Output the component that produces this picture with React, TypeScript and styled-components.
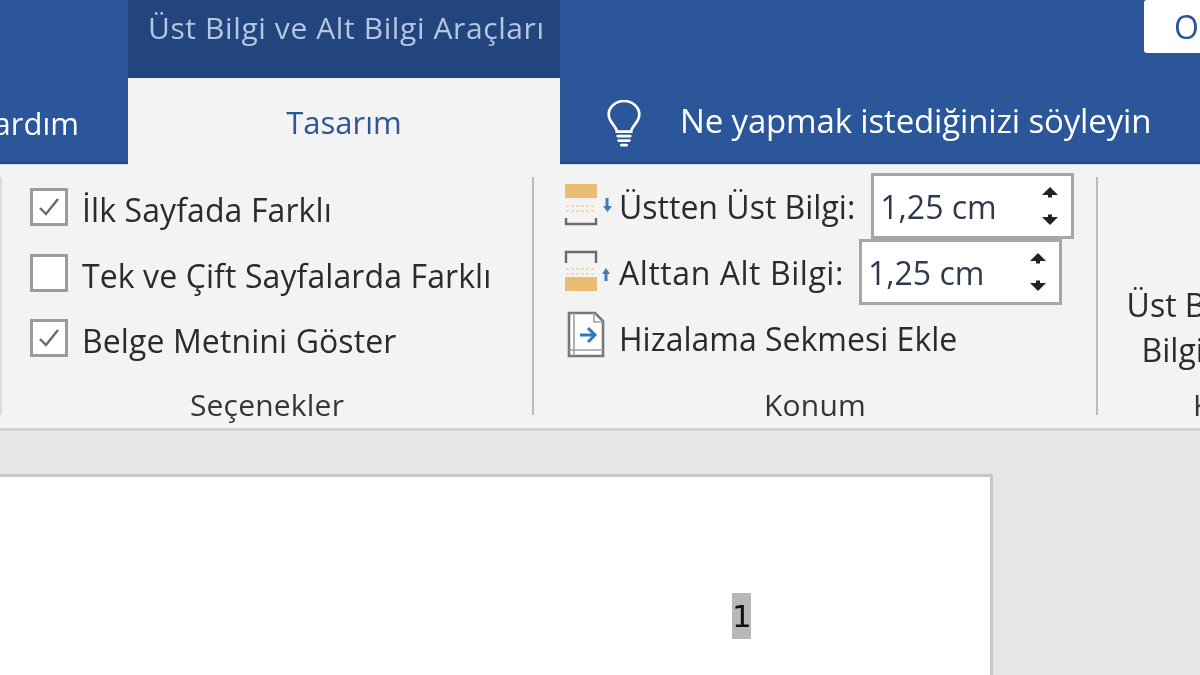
import React from "react";
import styled, { createGlobalStyle } from "styled-components";

const Global = createGlobalStyle`
  html, body { margin: 0; padding: 0; width: 1200px; height: 675px; overflow: hidden; background: #e6e6e6; }
  * { box-sizing: border-box; }
`;

const Window = styled.div`
  width: 1200px;
  height: 675px;
  overflow: hidden;
  display: flex;
  flex-direction: column;
  font-family: "Open Sans", "Noto Sans", sans-serif;
  filter: blur(0.5px);
`;

const TitleRow = styled.div`
  height: 78px;
  flex: none;
  background: #2b579a;
  display: flex;
  padding-left: 128px;
`;

const ContextTab = styled.div`
  width: 432px;
  background: #21457c;
  color: #b4c6e0;
  font-size: 30px;
  letter-spacing: 0.6px;
  padding: 7px 0 0 20px;
  white-space: nowrap;
`;

const AccountButton = styled.div`
  margin-left: 584px;
  width: 56px;
  height: 53px;
  background: #fff;
  border-radius: 3px 0 0 3px;
  color: #2b579a;
  font-size: 32px;
  padding: 5px 0 0 30px;
  overflow: hidden;
`;

const TabRow = styled.div`
  height: 87px;
  flex: none;
  background: #2b579a;
  display: flex;
  box-shadow: inset 0 -1px 0 #cfdff2, inset 0 -3px 0 #24497f;
`;

const HelpTab = styled.div`
  width: 128px;
  direction: rtl;
  overflow: hidden;
  color: #fff;
  font-size: 31px;
  padding: 24px 49px 0 0;
  white-space: nowrap;
`;

const ActiveTab = styled.div`
  width: 432px;
  background: #f3f3f3;
  color: #2b579a;
  font-size: 31px;
  text-align: center;
  padding-top: 23px;
`;

const TellMe = styled.div`
  display: flex;
  color: #fff;
  font-size: 33px;
  letter-spacing: -0.15px;
  padding: 20px 0 0 46px;
  white-space: nowrap;
`;

const BulbIcon = styled.svg`
  width: 36px;
  height: 47px;
  margin: 2px 38px 0 0;
  flex: none;
`;

const Ribbon = styled.div`
  height: 266px;
  flex: none;
  background: #f3f3f3;
  border-bottom: 3px solid #d2d2d2;
  display: flex;
  padding-top: 8px;
`;

const Separator = styled.div<{ $c: string }>`
  width: 2px;
  height: 238px;
  margin-top: 4px;
  flex: none;
  background: ${(p) => p.$c};
`;

const Group = styled.div<{ $w: number }>`
  width: ${(p) => p.$w}px;
  flex: none;
  display: flex;
  flex-direction: column;
  color: #2b2b2b;
`;

const GroupBody = styled.div`
  height: 211px;
  flex: none;
  display: flex;
  flex-direction: column;
`;

const GroupLabel = styled.div`
  text-align: center;
  font-size: 30px;
  letter-spacing: 0.2px;
  color: #363636;
  white-space: nowrap;
`;

const OptionsBody = styled(GroupBody)`
  padding: 15px 0 0 28px;
  gap: 27.5px;
`;

const CheckRow = styled.div`
  display: flex;
  align-items: flex-start;
  height: 38px;
  gap: 14px;
  font-size: 32px;
  line-height: 44px;
  letter-spacing: 0.1px;
  white-space: nowrap;
`;

const CheckBox = styled.div`
  width: 38px;
  height: 38px;
  border: 3px solid #9b9b9b;
  background: #fff;
  flex: none;
  display: flex;
  align-items: center;
  justify-content: center;
`;

const PositionBody = styled(GroupBody)`
  padding-left: 31px;
`;

const PosRow = styled.div<{ $spacing?: number }>`
  display: flex;
  align-items: center;
  height: 66px;
  font-size: 32px;
  letter-spacing: ${(p) => p.$spacing ?? 0}px;
  white-space: nowrap;
`;

const RowIcon = styled.svg`
  width: 48px;
  height: 46px;
  flex: none;
  margin-right: 6px;
  overflow: visible;
`;

const Spin = styled.div<{ $ml: number }>`
  width: 203px;
  height: 66px;
  margin-left: ${(p) => p.$ml}px;
  border: 3px solid #a6a6a6;
  background: #fff;
  display: flex;
  align-items: center;
  justify-content: space-between;
  padding: 0 13px 0 6px;
  color: #2f3a4d;
  font-size: 32px;
  letter-spacing: 0;
`;

const SpinArrows = styled.svg`
  width: 16px;
  height: 38px;
  flex: none;
`;

const LayoutBody = styled(GroupBody)`
  align-items: center;
  font-size: 32px;
  line-height: 45px;
  padding: 109px 4px 0 0;
  white-space: nowrap;
`;

const DocArea = styled.div`
  flex: 1;
  min-height: 0;
  background: #e6e6e6;
  padding-top: 43px;
`;

const Page = styled.div`
  width: 993px;
  height: 220px;
  background: #fff;
  border-top: 3px solid #c6c6c6;
  border-right: 3px solid #c6c6c6;
  padding: 116px 0 0 732px;
`;

const PageNumber = styled.div`
  width: 19px;
  height: 46px;
  background: #b8b8b8;
  color: #111;
  font-family: "DejaVu Sans", sans-serif;
  font-size: 31px;
  line-height: 46px;
  text-align: center;
`;

const Check = () => (
  <svg width="26" height="24" viewBox="0 0 26 24">
    <path d="M4 13l6 6L22 4" fill="none" stroke="#6b6b6b" strokeWidth="2.4" />
  </svg>
);

const Arrows = () => (
  <SpinArrows viewBox="0 0 16 38">
    <path d="M8 0l8 8H0z" fill="#222" />
    <rect x="6" y="8" width="4" height="2.500" fill="#222" />
    <path d="M8 38l-8-8h16z" fill="#222" />
    <rect x="6" y="27.500" width="4" height="2.500" fill="#222" />
  </SpinArrows>
);

export default function App() {
  return (
    <Window>
      <Global />
      <TitleRow>
        <ContextTab>Üst Bilgi ve Alt Bilgi Araçları</ContextTab>
        <AccountButton>O</AccountButton>
      </TitleRow>
      <TabRow>
        <HelpTab>Yardım</HelpTab>
        <ActiveTab>Tasarım</ActiveTab>
        <TellMe>
          <BulbIcon viewBox="0 0 40 52" fill="none" stroke="#fff" strokeWidth="3">
            <path d="M12 35c0-6-9-10-9-19a17 15 0 0 1 34 0c0 9-9 13-9 19z" />
            <path d="M13 40h14M14 45h12M17 50h6" strokeLinecap="round" />
          </BulbIcon>
          Ne yapmak istediğinizi söyleyin
        </TellMe>
      </TabRow>
      <Ribbon>
        <Separator $c="#dcdcdc" />
        <Group $w={530}>
          <OptionsBody>
            <CheckRow>
              <CheckBox><Check /></CheckBox>
              İlk Sayfada Farklı
            </CheckRow>
            <CheckRow>
              <CheckBox />
              Tek ve Çift Sayfalarda Farklı
            </CheckRow>
            <CheckRow>
              <CheckBox><Check /></CheckBox>
              Belge Metnini Göster
            </CheckRow>
          </OptionsBody>
          <GroupLabel>Seçenekler</GroupLabel>
        </Group>
        <Separator $c="#bcbcbc" />
        <Group $w={562}>
          <PositionBody>
            <PosRow>
              <RowIcon viewBox="0 0 48 46">
                <rect x="0" y="1" width="32" height="14" fill="#ebbd72" />
                <path d="M1 23h30M1 28h30" stroke="#eed3a4" strokeWidth="1.6" strokeDasharray="3 2" />
                <path d="M1 35v6h30v-6" fill="none" stroke="#6a6a6a" strokeWidth="2.4" />
                <path d="M42 15v9" stroke="#3f7cb8" strokeWidth="3" />
                <path d="M38 23h9l-4.500 6z" fill="#3f7cb8" />
              </RowIcon>
              Üstten Üst Bilgi:
              <Spin $ml={16}>1,25 cm<Arrows /></Spin>
            </PosRow>
            <PosRow $spacing={0.55}>
              <RowIcon viewBox="0 0 48 46">
                <path d="M1 14V3h30v11" fill="none" stroke="#6a6a6a" strokeWidth="2.4" />
                <path d="M1 20h30M1 25h30" stroke="#eed3a4" strokeWidth="1.6" strokeDasharray="3 2" />
                <rect x="0" y="28" width="32" height="14" fill="#ebbd72" />
                <path d="M41 24v8" stroke="#3f7cb8" strokeWidth="3" />
                <path d="M37 25h8l-4-6z" fill="#3f7cb8" />
              </RowIcon>
              Alttan Alt Bilgi:
              <Spin $ml={15}>1,25 cm<Arrows /></Spin>
            </PosRow>
            <PosRow>
              <RowIcon viewBox="0 0 48 46">
                <path d="M4 -2h26l8 8v35H4z" fill="#fff" stroke="#777" strokeWidth="2.6" />
                <path d="M9 -2v43M4 35h34M29 -2v9h9" fill="none" stroke="#a0a0a0" strokeWidth="1.6" />
                <path d="M15 20h15" stroke="#2f78bd" strokeWidth="3" />
                <path d="M23 13l7 7-7 7" fill="none" stroke="#2f78bd" strokeWidth="3" />
              </RowIcon>
              Hizalama Sekmesi Ekle
            </PosRow>
          </PositionBody>
          <GroupLabel>Konum</GroupLabel>
        </Group>
        <Separator $c="#bcbcbc" />
        <Group $w={272}>
          <LayoutBody>
            <span>Üst Bilgi ve Alt</span>
            <span>Bilgiyi Kapat</span>
          </LayoutBody>
          <GroupLabel>Kapat</GroupLabel>
        </Group>
      </Ribbon>
      <DocArea>
        <Page>
          <PageNumber>1</PageNumber>
        </Page>
      </DocArea>
    </Window>
  );
}
